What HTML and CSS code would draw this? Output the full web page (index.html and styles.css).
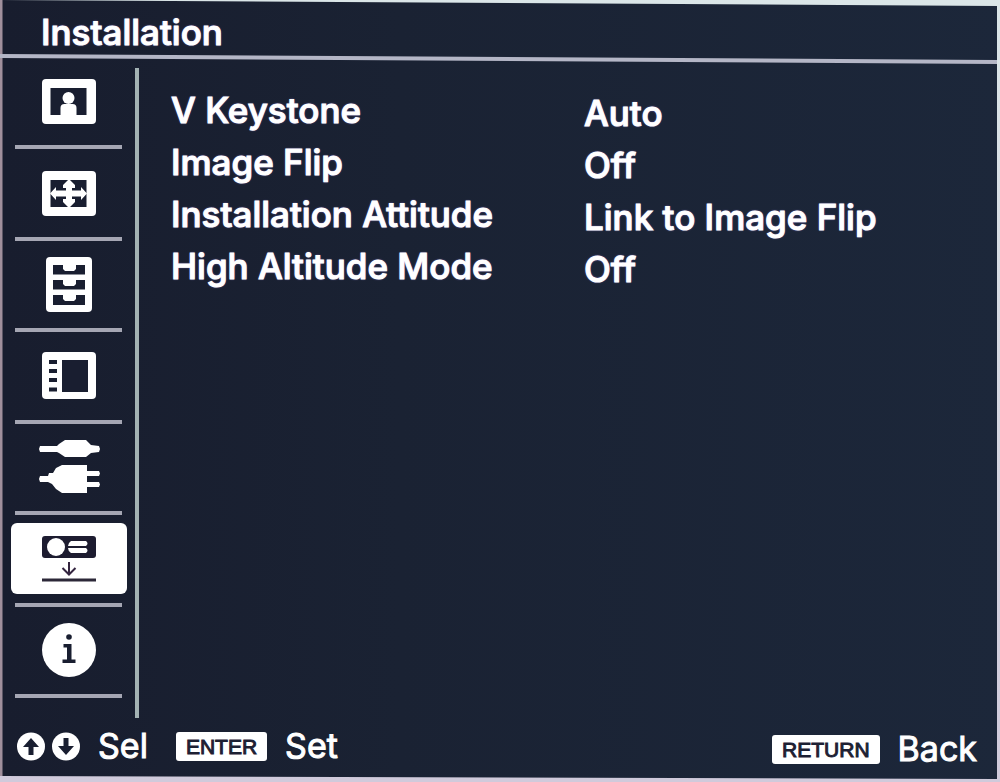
FILE: index.html
```html
<!DOCTYPE html>
<html lang="en">
<head>
<meta charset="utf-8">
<title>Installation</title>
<link rel="stylesheet" href="styles.css">
</head>
<body>
<div class="screen">
  <header class="header">
    <h1 class="title">Installation</h1>
    <svg class="rule" viewBox="0 0 1000 10" preserveAspectRatio="none" aria-hidden="true">
      <path d="M0 0L1000 6V10L0 4Z" fill="#b4b6c6"/>
    </svg>
  </header>

  <div class="body">
    <nav class="menu" aria-label="Settings pages">
      <ul class="menu-list">
        <li class="menu-item"><button class="tab" type="button" aria-label="Picture">
          <svg width="54" height="45" viewBox="0 0 54 45"><rect width="54" height="45" rx="4" fill="#fff"/><path class="hole" d="M8.500 9h36v27h-36z"/><circle cx="26.500" cy="19" r="6" fill="#fff"/><path d="M18.500 37v-8q0-4 4-4h8q4 0 4 4v8z" fill="#fff"/></svg>
        </button></li>
        <li class="menu-item"><button class="tab" type="button" aria-label="Screen">
          <svg width="54" height="45" viewBox="0 0 54 45"><rect width="54" height="45" rx="4" fill="#fff"/><path class="hole" d="M8.500 9h36v27h-36z"/><path d="M8 22.500L14 16V19.500H24V17H21V14L27 8L33 14V17H30V19.500H39V16L45 22.500L39 29V25.500H30V28H33V31L27 37L21 31V28H24V25.500H14V29Z" fill="#fff"/></svg>
        </button></li>
        <li class="menu-item"><button class="tab" type="button" aria-label="Function">
          <svg width="46" height="55" viewBox="0 0 46 55"><rect width="46" height="55" rx="4" fill="#fff"/><path class="hole" d="M7 8h10v4l2 2h9l2-2v-4h9v9.500h-32zM7 23h10v4l2 2h9l2-2v-4h9v9.500h-32zM7 38h10v4l2 2h9l2-2v-4h9v10h-32z"/></svg>
        </button></li>
        <li class="menu-item"><button class="tab" type="button" aria-label="Operation">
          <svg width="54" height="47" viewBox="0 0 54 47"><rect width="54" height="47" rx="4" fill="#fff"/><path class="hole" d="M7 8h8v4h-8zM7 17h8v4h-8zM7 26h8v4h-8zM7 35.500h8v4h-8zM20 8h26v32h-26z"/></svg>
        </button></li>
        <li class="menu-item"><button class="tab" type="button" aria-label="Connection and power">
          <svg width="61" height="54" viewBox="0 0 61 54"><path d="M1 6H18L20 4L26 0H47L52 5L60 6L61 9L60 12L52 13L47 17H26L20 13L18 12H1L0 9ZM1 36H9L10 33H14L17 28L23 25H48V31H60L61 33.500L60 36H48V42H60L61 44.500L60 47H48V53H23L17 49L13 44L9 42H1L0 39Z" fill="#fff"/></svg>
        </button></li>
        <li class="menu-item"><button class="tab tab-selected" type="button" aria-label="Installation" aria-current="page">
          <svg width="54" height="46" viewBox="0 0 54 46"><rect width="54" height="22" rx="3" fill="#1d1c30"/><circle cx="14" cy="11" r="9" fill="#fff"/><path d="M29 5h15q3 2.500 0 5h-18q0-3 3-5zM26 12h18q3 2.500 0 5h-15q-3-2-3-5z" fill="#fff"/><path d="M27 26v12M20.500 32l6.500 6.500L33.500 32" fill="none" stroke="#33243f" stroke-width="2"/><path d="M0 42.500h54v3H0z" fill="#2c2838"/></svg>
        </button></li>
        <li class="menu-item"><button class="tab" type="button" aria-label="Information">
          <svg width="54" height="54" viewBox="0 0 54 54"><circle cx="27" cy="27" r="27" fill="#fff"/><circle class="hole" cx="27" cy="14" r="2.800"/><path class="hole" d="M21.500 21h8v15.500h4v3.500h-13v-3.500h4.500v-12h-3.500z"/></svg>
        </button></li>
      </ul>
    </nav>

    <main class="content">
      <dl class="settings">
        <dt class="label">V Keystone</dt><dd class="value">Auto</dd>
        <dt class="label">Image Flip</dt><dd class="value">Off</dd>
        <dt class="label">Installation Attitude</dt><dd class="value">Link to Image Flip</dd>
        <dt class="label">High Altitude Mode</dt><dd class="value">Off</dd>
      </dl>
    </main>
  </div>

  <footer class="footer">
    <div class="hints">
      <span class="arrows">
        <svg width="28" height="29" viewBox="0 0 28 29"><circle cx="14" cy="14.500" r="14" fill="#fff"/><path class="hole" d="M14 6L22 15H16.500V23H11.500V15H6Z"/></svg>
        <svg width="28" height="29" viewBox="0 0 28 29"><circle cx="14" cy="14.500" r="14" fill="#fff"/><path class="hole" d="M14 23L6 14H11.500V6H16.500V14H22Z"/></svg>
      </span>
      <span class="hint">Sel</span>
      <kbd class="key key-enter">ENTER</kbd>
      <span class="hint">Set</span>
    </div>
    <div class="hints hints-end">
      <kbd class="key">RETURN</kbd>
      <span class="hint">Back</span>
    </div>
  </footer>
</div>
</body>
</html>
```
FILE: styles.css
```css
* {
  box-sizing: border-box;
}

body {
  margin: 0;
  background: linear-gradient(#dbe6e8, #d0cadb);
  color: #fff;
  font-family: Inter, "Liberation Sans", Arial, sans-serif;
}

.screen {
  display: flex;
  flex-direction: column;
  min-height: 100vh;
  padding: 0 3px 6px 0;
  background: linear-gradient(to right, #a08f9c 2px, #181d2e 3px, #1a2233 40%, #1c273a);
  clip-path: polygon(0 0, calc(100% - 3px) 6px, calc(100% - 3px) calc(100% - 3px), 0 calc(100% - 6px));
}

.header {
  padding-top: 14px;
}

.title {
  margin: 0;
  padding-left: 41px;
  font-size: 35px;
  font-weight: 500;
  line-height: 36px;
  -webkit-text-stroke: 1px #fff;
  text-shadow: 0 0 2px #a58bff;
}

.rule {
  display: block;
  width: 100%;
  height: 10px;
  margin: 4px 0 -6px;
}

.body {
  display: flex;
  flex: 1;
}

.menu {
  display: flex;
  width: 135px;
  padding: 0 13px 20px 15px;
}

.menu-list {
  display: grid;
  flex: 1;
  grid-auto-rows: 1fr;
  margin: 0;
  padding: 0;
  list-style: none;
}

.menu-item {
  display: flex;
  align-items: center;
  border-bottom: 4px solid #a5a6b3;
}

.tab {
  display: flex;
  flex: 1;
  align-items: center;
  justify-content: center;
  height: 71px;
  margin: 0 -5px 0 -4px;
  padding: 0;
  border: 0;
  border-radius: 6px;
  background: none;
}

.tab-selected {
  background: #fff;
}

.hole {
  fill: #191e30;
}

.content {
  flex: 1;
  margin-top: 10px;
  padding: 16px 0 0 32px;
  border-left: 4px solid #a3b2b3;
}

.settings {
  display: grid;
  grid-template-columns: 1fr 1fr;
  grid-auto-rows: 52px;
  margin: 0;
  font-size: 35px;
  font-weight: 500;
  line-height: 52px;
  -webkit-text-stroke: 1px #fff;
  text-shadow: 0 0 2px #a58bff;
}

.value {
  margin: 0;
  padding-top: 3px;
}

.footer {
  display: flex;
  justify-content: space-between;
  height: 58px;
  padding: 0 20px 2px 17px;
}

.hints {
  display: flex;
  align-items: center;
  gap: 18px;
}

.hints-end {
  padding-top: 6px;
}

.arrows {
  display: flex;
  gap: 7px;
}

.hint {
  font-size: 34px;
  line-height: 36px;
  -webkit-text-stroke: 1px #fff;
}

.key {
  height: 29px;
  padding: 0 10px;
  border-radius: 3px;
  background: #fff;
  color: #1d2033;
  font-family: "Liberation Sans", Arial, sans-serif;
  font-size: 21px;
  line-height: 30px;
  -webkit-text-stroke: 1px #1d2033;
}

.key-enter {
  margin-left: 10px;
}
```
